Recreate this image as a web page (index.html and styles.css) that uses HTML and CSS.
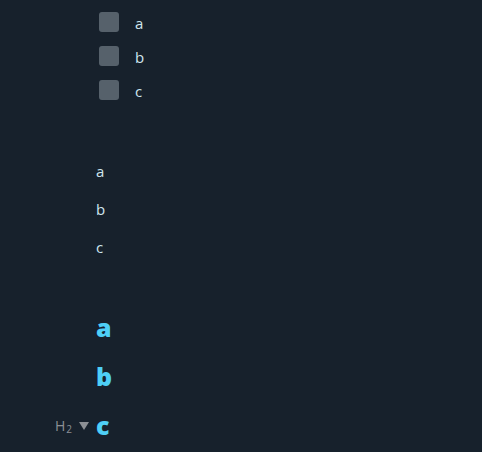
FILE: index.html
```html
<!DOCTYPE html>
<html>
<head>
<meta charset="utf-8">
<link rel="stylesheet" href="styles.css">
</head>
<body>
<ul class="tasks">
  <li class="task"><span class="box"></span><span class="label">a</span></li>
  <li class="task"><span class="box"></span><span class="label">b</span></li>
  <li class="task"><span class="box"></span><span class="label">c</span></li>
</ul>
<ul class="plain">
  <li>a</li>
  <li>b</li>
  <li>c</li>
</ul>
<div class="heads">
  <h2 class="head">a</h2>
  <h2 class="head">b</h2>
  <h2 class="head focus"><span class="hint"><span class="hn">H<span class="num">2</span></span><span class="tri"></span></span>c</h2>
</div>
</body>
</html>
```
FILE: styles.css
```css
html, body {
  margin: 0;
  padding: 0;
  background: #17212c;
  font-family: "Open Sans", "Liberation Sans", sans-serif;
  color: #d9e2ea;
}
ul {
  list-style: none;
  margin: 0;
  padding: 0;
}
.tasks {
  padding-left: 99px;
  padding-top: 12px;
  display: flex;
  flex-direction: column;
  gap: 14px;
}
.task {
  display: flex;
  align-items: center;
  gap: 16px;
  height: 20px;
  font-size: 15px;
}
.label {
  color: #cfe6ef;
  position: relative;
  top: 1px;
}
.box {
  width: 20px;
  height: 20px;
  border-radius: 3px;
  background: #56616b;
}
.plain {
  margin-top: 52px;
  padding-left: 96px;
  font-size: 15px;
  line-height: 38px;
  color: #cfe6ef;
}
.heads {
  margin-top: 37px;
  padding-left: 96px;
}
.head {
  margin: 0;
  font-size: 25px;
  font-weight: 800;
  line-height: 49px;
  color: #4ecff6;
  position: relative;
}
.hint {
  position: absolute;
  left: -41px;
  top: 0;
  font-size: 14px;
  font-weight: 400;
  color: #8c9095;
  display: flex;
  align-items: center;
  gap: 7px;
  height: 49px;
}
.hn {
  line-height: 1;
}
.num {
  font-size: 10px;
  position: relative;
  top: 2px;
  margin-left: 1px;
}
.tri {
  width: 0;
  height: 0;
  border-left: 5px solid transparent;
  border-right: 5px solid transparent;
  border-top: 8px solid #8c9095;
}
```
